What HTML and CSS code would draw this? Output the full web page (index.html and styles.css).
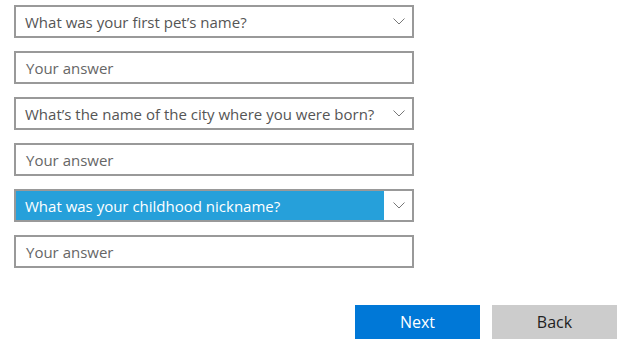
FILE: index.html
```html
<!DOCTYPE html>
<html lang="en">
<head>
  <meta charset="UTF-8">
  <title>Security questions</title>
  <link rel="stylesheet" href="styles.css">
</head>
<body>
  <div class="questions">
    <div class="field select">
      <span class="value">What was your first pet’s name?</span>
      <span class="chevron"><svg width="12" height="7" viewBox="0 0 12 7"><path d="M0.5 0.5 L6 6 L11.5 0.5" fill="none" stroke="#777" stroke-width="1"/></svg></span>
    </div>
    <div class="field answer">Your answer</div>

    <div class="field select">
      <span class="value">What’s the name of the city where you were born?</span>
      <span class="chevron"><svg width="12" height="7" viewBox="0 0 12 7"><path d="M0.5 0.5 L6 6 L11.5 0.5" fill="none" stroke="#777" stroke-width="1"/></svg></span>
    </div>
    <div class="field answer">Your answer</div>

    <div class="field select active">
      <span class="value">What was your childhood nickname?</span>
      <span class="chevron"><svg width="12" height="7" viewBox="0 0 12 7"><path d="M0.5 0.5 L6 6 L11.5 0.5" fill="none" stroke="#777" stroke-width="1"/></svg></span>
    </div>
    <div class="field answer">Your answer</div>
  </div>

  <div class="actions">
    <button class="btn primary">Next</button>
    <button class="btn secondary">Back</button>
  </div>
</body>
</html>
```

FILE: styles.css
```css
body {
  margin: 0;
  background: #fff;
  font-family: "Open Sans", "Noto Sans", sans-serif;
  font-size: 15px;
}

.questions {
  display: flex;
  flex-direction: column;
  gap: 13px;
  width: 400px;
  padding: 5px 0 0 14px;
}

.field {
  box-sizing: border-box;
  height: 33px;
  border: 2px solid #999;
  display: flex;
  align-items: center;
  background: #fff;
}

.select .value {
  flex: 1;
  padding-left: 9px;
  color: #555;
  white-space: nowrap;
}

.chevron {
  width: 27px;
  height: 100%;
  display: flex;
  align-items: center;
  justify-content: center;
  background: #fff;
}

.select.active .value {
  background: #26a0da;
  color: #fff;
  height: 100%;
  display: flex;
  align-items: center;
  margin-right: 1px;
}

.answer {
  padding-left: 10px;
  color: #666;
}

.actions {
  display: flex;
  justify-content: flex-end;
  gap: 12px;
  padding: 37px 7px 0 0;
}

.btn {
  width: 125px;
  height: 34px;
  border: none;
  font-family: inherit;
  font-size: 16px;
}

.primary {
  background: #0078d7;
  color: #fff;
}

.secondary {
  background: #ccc;
  color: #222;
}
```
